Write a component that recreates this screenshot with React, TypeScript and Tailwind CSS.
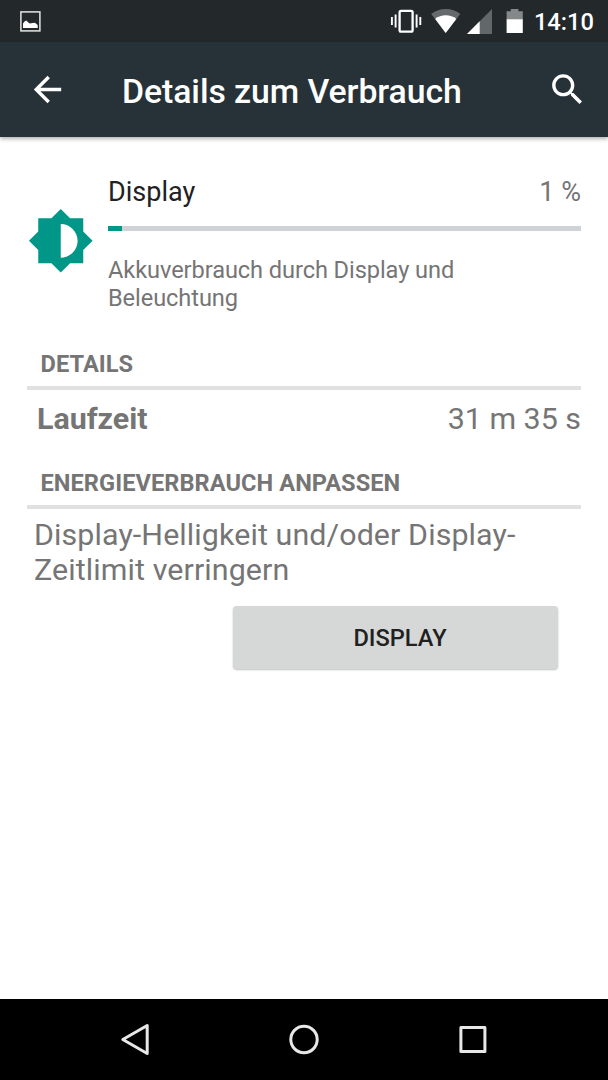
import React from 'react'

interface SectionHeaderProps {
  title: string
}

function StatusBar() {
  return (
    <div className="flex h-[42px] items-center justify-between bg-[#23282b] pl-5 pr-[14px]">
      <svg className="h-[21px] w-[21px]" viewBox="0 0 21 21">
        <rect x="0.9" y="0.9" width="19" height="19" fill="none" stroke="#e4e5e5" strokeWidth="1.5" />
        <path d="M3 17V12.6L4.5 10.6L6.4 9.6L8 11.2L9.8 12.4L12.6 12L15 11.8L17.7 14V17Z" fill="#fff" />
      </svg>
      <div className="flex items-center">
        <svg className="h-[42px] w-[144px]" viewBox="390 0 144 42">
          {/* Vibrate */}
          <rect x="399.6" y="10.8" width="13" height="20.8" rx="1.4" fill="none" stroke="#fff" strokeWidth="2.3" />
          <path d="M391.9 17V25M395.6 14.4V27.6M416.6 14.4V27.6M420.3 17V25" stroke="#fff" strokeWidth="1.9" />
          {/* Wi-Fi */}
          <path d="M445.7 33L431.2 14C439.5 7.2 452 7.2 460.3 14Z" fill="#666a6c" />
          <path d="M445.7 33L435.2 19C440.5 14 451 14 456.3 19Z" fill="#fff" />
          {/* Mobile signal */}
          <path d="M492 9V34H467Z" fill="#62676a" />
          <path d="M479.7 21.3V34H467Z" fill="#fff" />
          {/* Battery */}
          <path d="M510.8 9H518.4V11.2H522.8V20H506.6V11.2H510.8Z" fill="#858889" />
          <path d="M506.6 19.3H522.8V33H506.6Z" fill="#fff" />
        </svg>
        <span className="mt-[2px] text-[23.7px] font-medium leading-[28px] text-white">14:10</span>
      </div>
    </div>
  )
}

function AppBar() {
  return (
    <header className="flex h-[95px] items-center bg-[#273238] pb-px pl-[27px] pr-[20px] text-white shadow-[0_2px_4px_rgba(0,0,0,0.3)]">
      <button aria-label="Zurück">
        <svg className="h-[41px] w-[41px]" viewBox="0 0 24 24" fill="currentColor">
          <path d="M20 11H7.83l5.59-5.59L12 4l-8 8 8 8 1.41-1.41L7.83 13H20v-2z" />
        </svg>
      </button>
      <h1 className="ml-[54px] mt-[5px] flex-1 whitespace-nowrap text-[33.8px] font-medium leading-[40px] tracking-[-0.07px]">
        Details zum Verbrauch
      </h1>
      <button aria-label="Suchen">
        <svg className="h-[41px] w-[41px]" viewBox="0 0 24 24" fill="currentColor">
          <path d="M15.5 14h-.79l-.28-.27C15.41 12.59 16 11.11 16 9.5 16 5.91 13.09 3 9.5 3S3 5.91 3 9.5 5.91 16 9.5 16c1.61 0 3.09-.59 4.23-1.57l.27.28v.79l5 4.99L20.49 19l-4.99-5zm-6 0C7.01 14 5 11.99 5 9.5S7.01 5 9.5 5 14 7.01 14 9.5 11.99 14 9.5 14z" />
        </svg>
      </button>
    </header>
  )
}

function UsageSummary({ name, percent }: { name: string; percent: number }) {
  return (
    <section className="flex">
      <svg className="mt-[31px] h-[67.5px] w-[67.5px] shrink-0" viewBox="0 0 24 24" fill="#009788">
        <path d="M20 15.31L23.31 12 20 8.69V4h-4.69L12 .69 8.69 4H4v4.69L.69 12 4 15.31V20h4.69L12 23.31 15.31 20H20v-4.69zM12 18V6c3.31 0 6 2.69 6 6s-2.69 6-6 6z" />
      </svg>
      <div className="ml-[13.5px] flex-1">
        <div className="flex justify-between text-[27px] leading-[32px]">
          <span className="text-[#212121]">{name}</span>
          <span className="text-[#757575]">{percent} %</span>
        </div>
        <div className="mt-[18px] h-[5px] bg-[#cfd3d5]">
          <div className="h-full bg-[#009788]" style={{ width: `${percent * 3}%` }} />
        </div>
        <p className="mt-[25px] text-[23.6px] leading-[28px] tracking-[-0.08px] text-[#757575]">
          Akkuverbrauch durch Display und
          <br />
          Beleuchtung
        </p>
      </div>
    </section>
  )
}

function SectionHeader({ title }: SectionHeaderProps) {
  return (
    <h2 className="border-b-4 border-[#e1e1e1] pb-[8px] pl-[13.5px] text-[23.6px] font-bold leading-[28px] tracking-[0.06px] text-[#757575]">
      {title}
    </h2>
  )
}

function NavBar() {
  return (
    <nav className="flex h-[81px] items-center justify-between bg-black px-[115px]">
      <svg className="h-10 w-10" viewBox="0 0 40 40" fill="none" stroke="#e8e8e8" strokeWidth="3" strokeLinejoin="round">
        <path d="M32.2 5.5V33.5L7.8 19.5Z" />
      </svg>
      <svg className="h-10 w-10" viewBox="0 0 40 40" fill="none" stroke="#e8e8e8" strokeWidth="3">
        <circle cx="20" cy="19.5" r="13.2" />
      </svg>
      <svg className="h-10 w-10" viewBox="0 0 40 40" fill="none" stroke="#e8e8e8" strokeWidth="3" strokeLinejoin="round">
        <rect x="7.9" y="7.5" width="24" height="24" />
      </svg>
    </nav>
  )
}

export default function App() {
  return (
    <div className="flex h-[1080px] w-[608px] flex-col overflow-hidden bg-white font-['Roboto',sans-serif]">
      <StatusBar />
      <AppBar />

      <main className="flex flex-1 flex-col pl-[27px] pr-[27px] pt-[39px]">
        <UsageSummary name="Display" percent={1} />

        {/* Details */}
        <div className="mt-[38px]">
          <SectionHeader title="DETAILS" />
          <div className="flex justify-between pl-[10px] pt-[11px] text-[30.4px] leading-[36px] text-[#757575]">
            <span className="font-bold">Laufzeit</span>
            <span>31 m 35 s</span>
          </div>
        </div>

        {/* Adjust power usage */}
        <div className="mt-[32px]">
          <SectionHeader title="ENERGIEVERBRAUCH ANPASSEN" />
          <p className="pl-[7px] pt-[8px] text-[30.4px] leading-[35.4px] tracking-[0.1px] text-[#757575]">
            Display-Helligkeit und/oder Display-
            <br />
            Zeitlimit verringern
          </p>
          <div className="mt-[18px] flex justify-end pr-[23px]">
            <button className="h-[63px] w-[325px] rounded-[4px] bg-[#d6d8d7] pl-[9px] pt-[2px] text-[23.6px] font-medium text-[#212121] shadow-[0_1px_2px_rgba(0,0,0,0.25)]">
              DISPLAY
            </button>
          </div>
        </div>
      </main>

      <NavBar />
    </div>
  )
}
